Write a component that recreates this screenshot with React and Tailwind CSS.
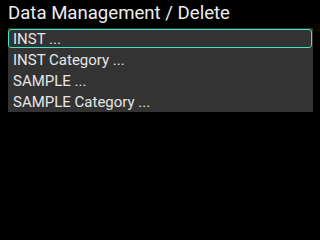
export default function App() {
  const items = ["INST ...", "INST Category ...", "SAMPLE ...", "SAMPLE Category ..."];
  return (
    <div className="w-[320px] h-[240px] bg-black overflow-hidden" style={{ fontFamily: "Roboto, sans-serif" }}>
      <div className="h-[28px] pl-2 text-[18.6px] leading-[27px] text-[#ececec]">Data Management / Delete</div>
      <div className="ml-2 w-[305px] bg-[#333333] flex flex-col">
        {items.map((t, i) => (
          <div key={t} className="h-[21px] p-[1px] pl-0 pr-[1px]">
            <div
              className={
                "h-[19px] pl-1 text-[15px] leading-[18px] text-[#e6e6e6] rounded-[3px] border " +
                (i === 0 ? "border-[#3ee6c4]" : "border-transparent")
              }
            >
              {t}
            </div>
          </div>
        ))}
      </div>
    </div>
  );
}
